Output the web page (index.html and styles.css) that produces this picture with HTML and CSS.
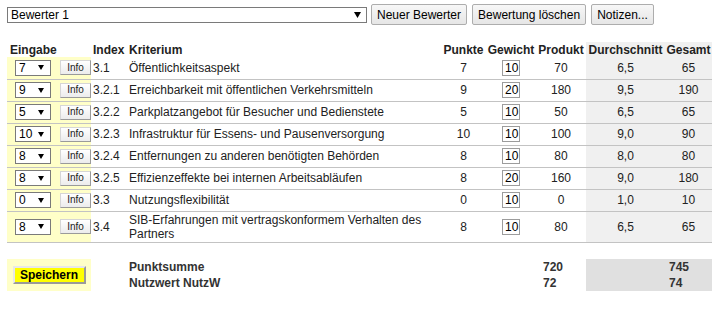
FILE: index.html
```html
<!DOCTYPE html>
<html lang="de">
<head>
<meta charset="utf-8">
<title>Bewertung</title>
<link rel="stylesheet" href="styles.css">
</head>
<body>
<div class="topbar">
  <div class="sel sel-main"><span>Bewerter 1</span><svg class="arr" width="7" height="6" viewBox="0 0 7 6"><polygon points="0,0 7,0 3.5,6" fill="#000"/></svg></div>
  <button class="btn">Neuer Bewerter</button>
  <button class="btn">Bewertung löschen</button>
  <button class="btn">Notizen...</button>
</div>
<table class="grid">
  <colgroup>
    <col class="w-in"><col class="w-idx"><col class="w-kr"><col class="w-pt"><col class="w-gw"><col class="w-pr"><col class="w-dd"><col class="w-gs">
  </colgroup>
  <thead>
    <tr>
      <th class="l pl3">Eingabe</th>
      <th class="l">Index</th>
      <th class="l">Kriterium</th>
      <th>Punkte</th>
      <th>Gewicht</th>
      <th>Produkt</th>
      <th class="avg">Durchschnitt</th>
      <th class="avg">Gesamt</th>
    </tr>
  </thead>
  <tbody class="data">
    <tr>
      <td class="in"><div class="inbox"><div class="sel sel-sm"><span>7</span><svg class="arr" width="6" height="5" viewBox="0 0 6 5"><polygon points="0,0 6,0 3,5" fill="#000"/></svg></div><button class="info">Info</button></div></td>
      <td class="l">3.1</td><td class="l">Öffentlichkeitsaspekt</td><td>7</td><td><span class="wt">10</span></td><td>70</td><td class="avg">6,5</td><td class="avg">65</td>
    </tr>
    <tr>
      <td class="in"><div class="inbox"><div class="sel sel-sm"><span>9</span><svg class="arr" width="6" height="5" viewBox="0 0 6 5"><polygon points="0,0 6,0 3,5" fill="#000"/></svg></div><button class="info">Info</button></div></td>
      <td class="l">3.2.1</td><td class="l">Erreichbarkeit mit öffentlichen Verkehrsmitteln</td><td>9</td><td><span class="wt">20</span></td><td>180</td><td class="avg">9,5</td><td class="avg">190</td>
    </tr>
    <tr>
      <td class="in"><div class="inbox"><div class="sel sel-sm"><span>5</span><svg class="arr" width="6" height="5" viewBox="0 0 6 5"><polygon points="0,0 6,0 3,5" fill="#000"/></svg></div><button class="info">Info</button></div></td>
      <td class="l">3.2.2</td><td class="l">Parkplatzangebot für Besucher und Bedienstete</td><td>5</td><td><span class="wt">10</span></td><td>50</td><td class="avg">6,5</td><td class="avg">65</td>
    </tr>
    <tr>
      <td class="in"><div class="inbox"><div class="sel sel-sm"><span>10</span><svg class="arr" width="6" height="5" viewBox="0 0 6 5"><polygon points="0,0 6,0 3,5" fill="#000"/></svg></div><button class="info">Info</button></div></td>
      <td class="l">3.2.3</td><td class="l">Infrastruktur für Essens- und Pausenversorgung</td><td>10</td><td><span class="wt">10</span></td><td>100</td><td class="avg">9,0</td><td class="avg">90</td>
    </tr>
    <tr>
      <td class="in"><div class="inbox"><div class="sel sel-sm"><span>8</span><svg class="arr" width="6" height="5" viewBox="0 0 6 5"><polygon points="0,0 6,0 3,5" fill="#000"/></svg></div><button class="info">Info</button></div></td>
      <td class="l">3.2.4</td><td class="l">Entfernungen zu anderen benötigten Behörden</td><td>8</td><td><span class="wt">10</span></td><td>80</td><td class="avg">8,0</td><td class="avg">80</td>
    </tr>
    <tr>
      <td class="in"><div class="inbox"><div class="sel sel-sm"><span>8</span><svg class="arr" width="6" height="5" viewBox="0 0 6 5"><polygon points="0,0 6,0 3,5" fill="#000"/></svg></div><button class="info">Info</button></div></td>
      <td class="l">3.2.5</td><td class="l">Effizienzeffekte bei internen Arbeitsabläufen</td><td>8</td><td><span class="wt">20</span></td><td>160</td><td class="avg">9,0</td><td class="avg">180</td>
    </tr>
    <tr>
      <td class="in"><div class="inbox"><div class="sel sel-sm"><span>0</span><svg class="arr" width="6" height="5" viewBox="0 0 6 5"><polygon points="0,0 6,0 3,5" fill="#000"/></svg></div><button class="info">Info</button></div></td>
      <td class="l">3.3</td><td class="l">Nutzungsflexibilität</td><td>0</td><td><span class="wt">10</span></td><td>0</td><td class="avg">1,0</td><td class="avg">10</td>
    </tr>
    <tr>
      <td class="in"><div class="inbox"><div class="sel sel-sm"><span>8</span><svg class="arr" width="6" height="5" viewBox="0 0 6 5"><polygon points="0,0 6,0 3,5" fill="#000"/></svg></div><button class="info">Info</button></div></td>
      <td class="l">3.4</td><td class="l">SIB-Erfahrungen mit vertragskonformem Verhalten des Partners</td><td>8</td><td><span class="wt">10</span></td><td>80</td><td class="avg">6,5</td><td class="avg">65</td>
    </tr>
  </tbody>
  <tbody class="foot">
    <tr class="spacer"><td colspan="8"></td></tr>
    <tr>
      <td class="in save" rowspan="2"><button class="savebtn">Speichern</button></td>
      <td></td>
      <td class="l b">Punktsumme</td>
      <td></td><td></td>
      <td class="l b fp">720</td>
      <td class="sum"></td>
      <td class="l b sum fg">745</td>
    </tr>
    <tr>
      <td></td>
      <td class="l b">Nutzwert NutzW</td>
      <td></td><td></td>
      <td class="l b fp">72</td>
      <td class="sum"></td>
      <td class="l b sum fg">74</td>
    </tr>
  </tbody>
</table>
</body>
</html>
```

FILE: styles.css
```css
html, body {
  margin: 0;
  background: #fff;
}
body {
  padding: 4px 7px;
  font-family: "Liberation Sans", Arial, sans-serif;
  font-size: 12px;
  color: #222;
}

.topbar {
  display: flex;
  align-items: center;
  height: 21px;
}

.sel {
  display: flex;
  align-items: center;
  justify-content: space-between;
  box-sizing: border-box;
  border: 1px solid #7a7a7a;
  background: #fff;
  color: #000;
  font-size: 12px;
  line-height: 14px;
}
.sel-main {
  width: 360px;
  height: 16px;
  padding: 0 5px 0 3px;
}
.sel-sm {
  width: 36px;
  height: 16px;
  padding: 0 6px 0 3px;
}
.arr { display: block; }

.btn {
  box-sizing: border-box;
  height: 21px;
  margin-left: 4px;
  padding: 0 5px;
  font-family: "Liberation Sans", Arial, sans-serif;
  font-size: 12px;
  color: #000;
  background: linear-gradient(#f7f7f7, #e6e6e6);
  border: 1px solid #adadad;
  border-radius: 2px;
}
.btn + .btn { margin-left: 5px; }

.grid {
  margin-top: 17px;
  width: 705px;
  table-layout: fixed;
  border-collapse: collapse;
  border-spacing: 0;
}
.w-in { width: 84px; }
.w-idx { width: 36px; }
.w-kr { width: 314px; }
.w-pt { width: 45px; }
.w-gw { width: 50px; }
.w-pr { width: 50px; }
.w-dd { width: 79px; }
.w-gs { width: 47px; }

.grid th {
  height: 15px;
  padding: 0;
  font-weight: bold;
  line-height: 14px;
  text-align: center;
  vertical-align: middle;
  color: #222;
  white-space: nowrap;
}
.grid th.l { text-align: left; padding-left: 2px; }
.grid th.pl3 { padding-left: 3px; }

.data td {
  height: 22px;
  padding: 1px 2px;
  box-sizing: border-box;
  line-height: 14px;
  text-align: center;
  vertical-align: middle;
  border-bottom: 1px solid #c3c3c3;
  color: #222;
}
.data td.l { text-align: left; }
.data td.in {
  padding: 0;
  background: #ffffc8;
}
.inbox {
  display: flex;
  align-items: center;
  padding-left: 8px;
  gap: 9px;
}
.info {
  box-sizing: border-box;
  width: 31px;
  height: 15px;
  padding: 0;
  font-family: "Liberation Sans", Arial, sans-serif;
  font-size: 10px;
  line-height: 12px;
  color: #222;
  background: linear-gradient(#ffffff, #ececec);
  border: 1px solid;
  border-color: #d6d6d6 #9a9a9a #9a9a9a #d6d6d6;
}
.avg { background: #f0f0f0; }

.wt {
  display: inline-block;
  box-sizing: border-box;
  width: 18px;
  height: 16px;
  padding-left: 2px;
  border: 1px solid #9c9c9c;
  background: #fff;
  color: #000;
  text-align: left;
  line-height: 15px;
  vertical-align: middle;
}

.foot td {
  padding: 0 2px;
  height: 16px;
  line-height: 16px;
}
.foot .spacer td { height: 16px; padding: 0; }
.foot .l { text-align: left; }
.foot .b { font-weight: bold; color: #333; }
.foot .fp { padding-left: 7px; }
.foot .fg { padding-left: 4px; }
.foot .sum { background: #e0e0e0; }
.foot td.save {
  padding: 0;
  background: #ffffc8;
  text-align: center;
  vertical-align: middle;
}
.savebtn {
  box-sizing: border-box;
  width: 73px;
  height: 18px;
  padding: 0;
  font-family: "Liberation Sans", Arial, sans-serif;
  font-size: 12px;
  font-weight: bold;
  color: #000;
  background: #ffff00;
  border: 2px solid;
  border-color: #e8e8e8 #9a9a9a #9a9a9a #e8e8e8;
  vertical-align: middle;
}
```
